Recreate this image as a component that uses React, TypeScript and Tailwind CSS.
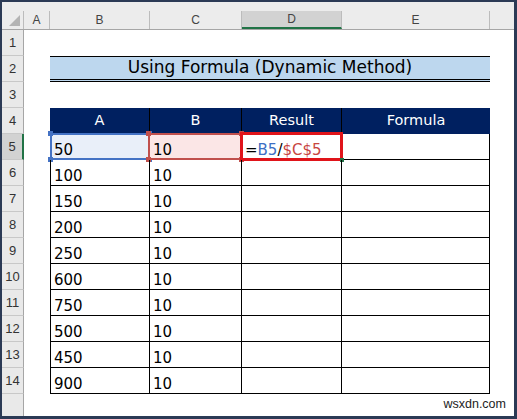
import React from "react";

const F = { fontFamily: '"DejaVu Sans", sans-serif' };

const bVals = ["50", "100", "150", "200", "250", "600", "750", "500", "450", "900"];

function RowHdr({ n, active }: { n: number; active?: boolean }) {
  return (
    <div
      className={`w-[22px] shrink-0 h-full flex items-end justify-center pb-[3px] border-b border-b-[#c8c8c8] text-[13px] text-[#333] ${
        active ? "bg-[#d2d2d2] border-r-2 border-r-[#217346]" : "bg-[#e9e9e9] border-r border-r-[#a6a6a6]"
      }`}
      style={{ fontFamily: '"Liberation Sans", Arial, sans-serif' }}
    >
      {n}
    </div>
  );
}

function Handle({ pos, color }: { pos: string; color: string }) {
  return <div className={`absolute w-[5px] h-[5px] ${pos} ${color}`} />;
}

export default function App() {
  return (
    <div className="w-[517px] h-[419px] bg-[#2b3a55] pt-[2px] pl-[2px] pr-[3px] pb-[3px]">
      <div className="relative w-full h-full bg-white flex flex-col overflow-hidden">
        {/* top band */}
        <div className="h-[9px] shrink-0 bg-[#ececec]" />
        {/* column headers */}
        <div
          className="h-[19px] shrink-0 flex bg-[#ececec] text-[12px] text-[#444] border-b border-[#a6a6a6]"
          style={{ fontFamily: '"Liberation Sans", Arial, sans-serif' }}
        >
          <div className="w-[22px] shrink-0 border-r border-[#bcbcbc] flex items-end justify-end pr-[3px] pb-[3px]">
            <svg width="11" height="11" viewBox="0 0 11 11">
              <polygon points="11,0 11,11 0,11" fill="#b4b4b4" />
            </svg>
          </div>
          <div className="w-[26px] shrink-0 border-r border-[#bcbcbc] flex items-center justify-center">A</div>
          <div className="w-[100px] shrink-0 border-r border-[#bcbcbc] flex items-center justify-center">B</div>
          <div className="w-[92px] shrink-0 border-r border-[#bcbcbc] flex items-center justify-center">C</div>
          <div className="w-[100px] shrink-0 border-r border-[#bcbcbc] bg-[#d2d2d2] border-b-2 border-b-[#217346] flex items-center justify-center">
            D
          </div>
          <div className="w-[148px] shrink-0 border-r border-[#bcbcbc] flex items-center justify-center">E</div>
          <div className="flex-1" />
        </div>

        {/* row 1 */}
        <div className="h-[26px] shrink-0 flex">
          <RowHdr n={1} />
        </div>

        {/* row 2 title */}
        <div className="h-[26px] shrink-0 flex">
          <RowHdr n={2} />
          <div className="w-[26px] shrink-0" />
          <div
            className="w-[440px] shrink-0 bg-[#bdd7ee] border-t border-black border-b-[3px] border-b-black border-double flex items-center justify-center text-[17px] text-black"
            style={F}
          >
            Using Formula (Dynamic Method)
          </div>
        </div>

        {/* row 3 */}
        <div className="h-[26px] shrink-0 flex">
          <RowHdr n={3} />
        </div>

        {/* row 4 header */}
        <div className="h-[26px] shrink-0 flex">
          <RowHdr n={4} />
          <div className="w-[26px] shrink-0" />
          <div className="flex bg-[#002060] text-white text-[14.5px]" style={F}>
            <div className="w-[100px] shrink-0 border-r border-black flex items-center justify-center">A</div>
            <div className="w-[92px] shrink-0 border-r border-black flex items-center justify-center">B</div>
            <div className="w-[100px] shrink-0 border-r border-black flex items-center justify-center">Result</div>
            <div className="w-[148px] shrink-0 flex items-center justify-center">Formula</div>
          </div>
        </div>

        {/* data rows */}
        {bVals.map((v, i) => {
          const first = i === 0;
          return (
            <div key={i} className="h-[26px] shrink-0 flex">
              <RowHdr n={i + 5} active={first} />
              <div className="w-[26px] shrink-0" />
              <div className="flex text-[15px] text-black leading-[18px]" style={F}>
                <div
                  className={`relative w-[100px] shrink-0 border-l border-r border-b border-black pl-[3px] flex items-end ${
                    first ? "bg-[#e9eff9]" : ""
                  }`}
                >
                  {v}
                  {first && (
                    <>
                      <div className="absolute -left-[1px] -top-[1px] -right-[1px] -bottom-[1px] border-2 border-[#4472c4]" />
                      <Handle pos="-left-[3px] -top-[3px]" color="bg-[#4472c4]" />
                      <Handle pos="-left-[3px] -bottom-[3px]" color="bg-[#4472c4]" />
                      <Handle pos="-right-[3px] -top-[3px]" color="bg-[#4472c4]" />
                      <Handle pos="-right-[3px] -bottom-[3px]" color="bg-[#4472c4]" />
                    </>
                  )}
                </div>
                <div
                  className={`relative w-[92px] shrink-0 border-r border-b border-black pl-[3px] flex items-end ${
                    first ? "bg-[#fbe6e6]" : ""
                  }`}
                >
                  10
                  {first && (
                    <>
                      <div className="absolute -left-[2px] -top-[1px] -right-[1px] -bottom-[1px] border-2 border-[#c0504d]" />
                      <Handle pos="-left-[4px] -top-[3px]" color="bg-[#c0504d]" />
                      <Handle pos="-left-[4px] -bottom-[3px]" color="bg-[#c0504d]" />
                      <Handle pos="-right-[3px] -top-[3px]" color="bg-[#c0504d]" />
                      <Handle pos="-right-[3px] -bottom-[3px]" color="bg-[#c0504d]" />
                    </>
                  )}
                </div>
                <div className="relative w-[100px] shrink-0 border-r border-b border-black pl-[3px] flex items-end">
                  {first && (
                    <>
                      <div className="absolute -left-[2px] -top-[2px] -right-[2px] -bottom-[2px] border-[3px] border-[#e0141a] bg-white" />
                      <span className="relative">
                        <span className="text-black">=</span>
                        <span className="text-[#3d6fc4]">B5</span>
                        <span className="text-black">/</span>
                        <span className="text-[#c8453f]">$C$5</span>
                      </span>
                      <div className="absolute -right-[3px] -bottom-[3px] w-[4px] h-[4px] bg-[#217346]" />
                    </>
                  )}
                </div>
                <div className="w-[148px] shrink-0 border-r border-b border-black" />
              </div>
            </div>
          );
        })}

        {/* remaining area */}
        <div className="flex-1 flex">
          <div className="w-[22px] shrink-0 h-full bg-[#e9e9e9] border-r border-[#a6a6a6]" />
        </div>

        <div
          className="absolute right-[8px] bottom-[2px] text-[12.5px] text-[#222]"
          style={{ fontFamily: '"Liberation Sans", Arial, sans-serif' }}
        >
          wsxdn.com
        </div>
      </div>
    </div>
  );
}
